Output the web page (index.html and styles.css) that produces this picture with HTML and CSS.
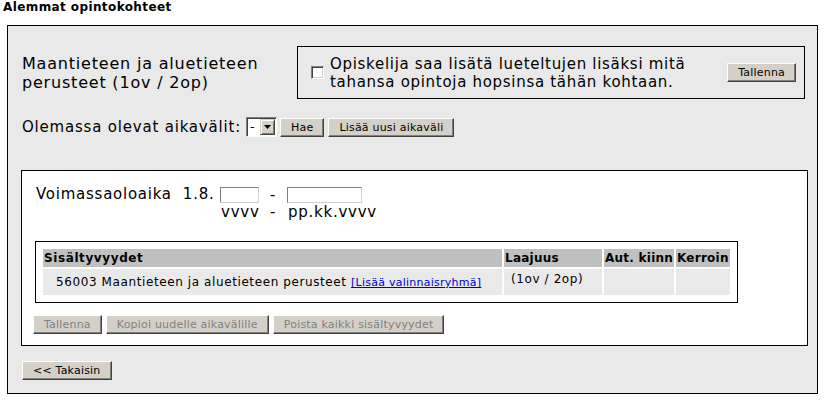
FILE: index.html
```html
<!DOCTYPE html>
<html lang="fi">
<head>
<meta charset="utf-8">
<title>Alemmat opintokohteet</title>
<link rel="stylesheet" href="styles.css">
</head>
<body>
<div class="page-title">Alemmat opintokohteet</div>
<div class="panel">
  <div class="top-row">
    <h1 class="course-title">Maantieteen ja aluetieteen perusteet (1ov / 2op)</h1>
    <div class="free-box">
      <input type="checkbox" class="cb" id="free">
      <label for="free" class="free-label">Opiskelija saa lisätä lueteltujen lisäksi mitä<br>tahansa opintoja hopsinsa tähän kohtaan.</label>
      <button class="btn btn-save">Tallenna</button>
    </div>
  </div>

  <div class="period-row">
    <span class="period-label">Olemassa olevat aikavälit:</span>
    <span class="select"><span class="select-val">-</span><span class="select-btn"><svg width="7" height="4" viewBox="0 0 7 4"><path d="M0 0h7L3.5 4z" fill="#000"/></svg></span></span>
    <button class="btn">Hae</button>
    <button class="btn">Lisää uusi aikaväli</button>
  </div>

  <div class="period-box">
    <div class="validity">
      <span class="v-label">Voimassaoloaika&nbsp;&nbsp;1.8.</span>
      <input type="text" class="txt txt-year">
      <span class="v-dash">-</span>
      <input type="text" class="txt txt-date">
      <span></span>
      <span class="v-hint">vvvv</span>
      <span class="v-dash">-</span>
      <span class="v-hint">pp.kk.vvvv</span>
    </div>

    <div class="incl-box">
      <table class="incl">
        <colgroup>
          <col class="c-name">
          <col class="c-size">
          <col class="c-auto">
          <col class="c-coef">
        </colgroup>
        <thead>
          <tr>
            <th>Sisältyvyydet</th>
            <th>Laajuus</th>
            <th>Aut. kiinn</th>
            <th>Kerroin</th>
          </tr>
        </thead>
        <tbody>
          <tr>
            <td class="d-name">56003 Maantieteen ja aluetieteen perusteet <a href="#" class="add-link">[Lisää valinnaisryhmä]</a></td>
            <td class="d-size">(1ov / 2op)</td>
            <td></td>
            <td></td>
          </tr>
        </tbody>
      </table>
    </div>

    <div class="actions">
      <button class="btn" disabled>Tallenna</button>
      <button class="btn" disabled>Kopioi uudelle aikavälille</button>
      <button class="btn" disabled>Poista kaikki sisältyvyydet</button>
    </div>
  </div>

  <div class="back-row">
    <button class="btn">&lt;&lt; Takaisin</button>
  </div>
</div>
</body>
</html>
```

FILE: styles.css
```css
* {
  box-sizing: border-box;
}

html, body {
  margin: 0;
  padding: 0;
  background: #fff;
}

body {
  width: 825px;
  height: 404px;
  overflow: hidden;
  font-family: "DejaVu Sans", Verdana, sans-serif;
  font-size: 15px;
  color: #000;
}

.page-title {
  font-weight: bold;
  font-size: 12px;
  letter-spacing: 0.4px;
  line-height: 15px;
  padding-left: 3px;
}

.panel {
  margin: 10px 7px 0 7px;
  background: #e9e9e9;
  border: 1px solid #000;
  padding: 20px 12px 13px 14px;
}

/* top row */
.top-row {
  display: flex;
  align-items: center;
}

.course-title {
  flex: 1;
  margin: 0;
  font-size: 16px;
  font-weight: normal;
  letter-spacing: 0.8px;
  line-height: 19px;
}

.free-box {
  width: 508px;
  height: 53px;
  border: 1px solid #000;
  display: flex;
  align-items: center;
  padding: 0 8px 0 13px;
}

.cb {
  appearance: none;
  -webkit-appearance: none;
  width: 13px;
  height: 13px;
  margin: 0 6px 0 0;
  background: #fff;
  border: 1px solid;
  border-color: #808080 #fff #fff #808080;
  box-shadow: inset 1px 1px #404040, inset -1px -1px #d4d0c8;
  flex: none;
}

.free-label {
  flex: 1;
  font-size: 15px;
  letter-spacing: 0.7px;
  line-height: 18px;
}

.btn {
  font-family: "DejaVu Sans", Verdana, sans-serif;
  font-size: 11px;
  letter-spacing: 0.2px;
  height: 19px;
  line-height: 17px;
  padding: 0 10px;
  margin: 0;
  background: #d4d0c8;
  color: #000;
  border: 1px solid;
  border-color: #fff #404040 #404040 #fff;
  box-shadow: inset -1px -1px #808080;
  border-radius: 0;
  white-space: nowrap;
  flex: none;
}

.btn:disabled {
  color: #808080;
}

.btn-save {
  margin-left: auto;
}

/* period row */
.period-row {
  margin-top: 18px;
  height: 20px;
  display: flex;
  align-items: center;
}

.period-label {
  letter-spacing: 0.8px;
  line-height: 18px;
  margin-right: 5px;
}

.select {
  display: flex;
  width: 31px;
  height: 20px;
  border: 1px solid;
  border-color: #808080 #fff #fff #808080;
  box-shadow: inset 1px 1px #404040;
  background: #fff;
  padding: 1px;
  margin-right: 3px;
}

.select-val {
  flex: 1;
  font-size: 13px;
  line-height: 16px;
  padding-left: 2px;
}

.select-btn {
  width: 15px;
  height: 16px;
  background: #d4d0c8;
  border: 1px solid;
  border-color: #d4d0c8 #404040 #404040 #d4d0c8;
  box-shadow: inset 1px 1px #fff, inset -1px -1px #808080;
  display: flex;
  align-items: center;
  justify-content: center;
}

.period-row .btn + .btn {
  margin-left: 4px;
}

/* period box */
.period-box {
  margin-top: 33px;
  margin-left: -1px;
  width: 787px;
  background: #fff;
  border: 1px solid #000;
  padding: 15px 0 11px 0;
}

.validity {
  display: grid;
  grid-template-columns: 184px 39px 28px 76px;
  grid-template-rows: 17px 18px;
  align-items: center;
  padding-left: 14px;
  letter-spacing: 0.75px;
}

.v-label {
  line-height: 17px;
  white-space: nowrap;
}

.v-dash {
  text-align: center;
  line-height: 18px;
}

.v-hint {
  line-height: 18px;
  white-space: nowrap;
  padding-left: 1px;
}

.txt {
  height: 16px;
  padding: 0;
  margin: 0;
  background: #fff;
  border: 1px solid;
  border-color: #808080 #d4d0c8 #d4d0c8 #808080;
  border-radius: 0;
}

.txt-year {
  width: 39px;
}

.txt-date {
  width: 75px;
}

.incl-box {
  margin: 20px 0 0 13px;
  width: 703px;
  border: 1px solid #000;
  padding: 5px;
}

.incl {
  width: 100%;
  table-layout: fixed;
  border-spacing: 2px;
  font-size: 12px;
  letter-spacing: 0.6px;
}

.c-name { width: 459px; }
.c-size { width: 98px; }
.c-auto { width: 70px; }
.c-coef { width: 54px; }

.incl th {
  background: #c0c0c0;
  font-weight: bold;
  text-align: left;
  height: 18px;
  line-height: 18px;
  padding: 0 0 0 1px;
  letter-spacing: 0.25px;
  white-space: nowrap;
}

.incl th:first-child {
  letter-spacing: 0.6px;
}

.incl td {
  background: #e9e9e9;
  height: 26px;
  padding: 0;
  vertical-align: middle;
}

.incl td.d-name {
  padding-left: 13px;
  white-space: nowrap;
}

.incl td.d-size {
  vertical-align: top;
  padding: 3px 0 0 7px;
  line-height: 15px;
}

.add-link {
  font-size: 11px;
  letter-spacing: 0.25px;
  color: #0000cc;
  text-decoration: underline;
}

.actions {
  display: flex;
  gap: 4px;
  margin: 12px 0 0 11px;
}

.back-row {
  margin-top: 15px;
  display: flex;
}
```
